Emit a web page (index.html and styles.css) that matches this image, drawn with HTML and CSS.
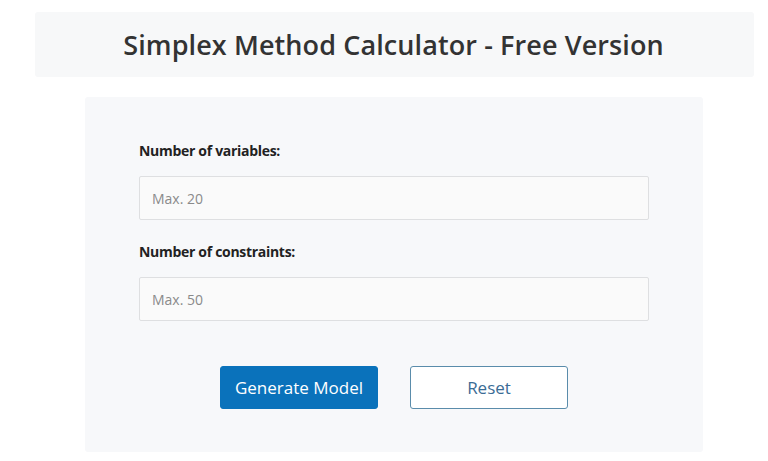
FILE: index.html
```html
<!DOCTYPE html>
<html lang="en">
<head>
    <meta charset="UTF-8">
    <meta name="viewport" content="width=device-width, initial-scale=1.0">
    <title>Simplex Method Calculator</title>
    <link rel="stylesheet" href="styles.css">
</head>
<body>
    <!-- Page title -->
    <div class="header">
        <h1>Simplex Method Calculator - Free Version</h1>
    </div>

    <!-- Model size form -->
    <div class="card">
        <form id="size-form">
            <label for="vars" class="field-label">Number of variables:</label>
            <input type="number" id="vars" class="input-box" placeholder="Max. 20">

            <label for="cons" class="field-label">Number of constraints:</label>
            <input type="number" id="cons" class="input-box" placeholder="Max. 50">

            <div class="buttons">
                <button type="submit" class="btn-generate">Generate Model</button>
                <button type="reset" class="btn-reset">Reset</button>
            </div>
        </form>
    </div>
</body>
</html>
```

FILE: styles.css
```css
/* General Styling */
* {
    margin: 0;
    padding: 0;
    box-sizing: border-box;
    font-family: "Open Sans", "Noto Sans", sans-serif;
}

body {
    background: #ffffff;
    padding: 12px 14px 0 35px;
}

/* Title bar */
.header {
    background: #f7f8f9;
    border-radius: 3px;
    height: 65px;
    display: flex;
    align-items: center;
    justify-content: center;
}

.header h1 {
    font-size: 27px;
    font-weight: 600;
    color: #333333;
    letter-spacing: 0.1px;
    padding-right: 2px;
}

/* Form card */
.card {
    width: 618px;
    margin: 20px 0 0 50px;
    background: #f7f8fa;
    border-radius: 3px;
    padding: 44px 54px 43px;
}

.field-label {
    display: block;
    font-size: 14px;
    font-weight: 700;
    color: #222222;
    letter-spacing: -0.3px;
    margin-bottom: 16px;
}

.input-box {
    display: block;
    width: 100%;
    height: 44px;
    padding: 0 12px;
    border: 1px solid #dedfe1;
    border-radius: 2px;
    background: #fafafa;
    font-size: 14px;
    color: #333;
    margin-bottom: 22px;
}

.input-box::placeholder {
    color: #8a8a8a;
}

/* Buttons */
.buttons {
    display: flex;
    justify-content: center;
    gap: 32px;
    margin-top: 45px;
}

.btn-generate,
.btn-reset {
    width: 158px;
    height: 43px;
    border-radius: 3px;
    font-size: 17px;
    cursor: pointer;
}

.btn-generate {
    background: #0a72bb;
    border: 1px solid #0a72bb;
    color: #ffffff;
}

.btn-reset {
    background: #ffffff;
    border: 1px solid #5a8cab;
    color: #3a6c95;
}
```
